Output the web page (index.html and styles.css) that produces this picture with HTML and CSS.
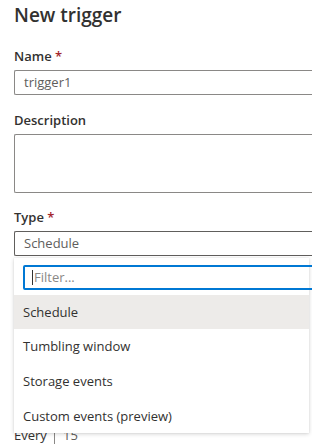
FILE: index.html
```html
<!DOCTYPE html>
<html>
<head>
<meta charset="utf-8">
<link rel="stylesheet" href="styles.css">
</head>
<body>
<div class="panel">
  <h1 class="title">New trigger</h1>
  <div class="field field-name">
    <div class="label">Name <span class="req">*</span></div>
    <div class="input">trigger1</div>
  </div>
  <div class="field field-desc">
    <div class="label">Description</div>
    <div class="textarea"></div>
  </div>
  <div class="field field-type">
    <div class="label">Type <span class="req">*</span></div>
    <div class="input select">Schedule</div>
  </div>
  <div class="every-row">
    <span class="every-label">Every</span>
    <span class="every-input">15</span>
  </div>
  <div class="dropdown">
    <div class="filter"><span class="caret"></span>Filter...</div>
    <div class="option selected">Schedule</div>
    <div class="option">Tumbling window</div>
    <div class="option">Storage events</div>
    <div class="option">Custom events (preview)</div>
  </div>
</div>
</body>
</html>
```

FILE: styles.css
```css
html, body {
  margin: 0;
  padding: 0;
  background: #ffffff;
  overflow: hidden;
}
body {
  width: 312px;
  height: 444px;
  font-family: "Open Sans", "Noto Sans", sans-serif;
  color: #323130;
}
.panel {
  position: relative;
  padding: 0 0 0 14px;
  height: 444px;
  box-sizing: border-box;
}
.title {
  margin: 0;
  padding-top: 2px;
  font-size: 19px;
  font-weight: 600;
  line-height: 26px;
  color: #323130;
}
.field {
  display: flex;
  flex-direction: column;
}
.label {
  font-size: 13px;
  font-weight: 600;
  line-height: 18px;
  height: 18px;
  margin-bottom: 5px;
  color: #323130;
}
.req {
  color: #a4262c;
}
.field-name { margin-top: 19px; }
.field-desc { margin-top: 16px; }
.field-type { margin-top: 15px; }
.input {
  height: 25px;
  box-sizing: border-box;
  border: 1px solid #8a8886;
  border-right: none;
  border-radius: 2px 0 0 2px;
  padding-left: 9px;
  font-size: 13px;
  line-height: 23px;
  color: #605e5c;
}
.select {
  border-color: #605e5c;
}
.textarea {
  height: 59px;
  box-sizing: border-box;
  border: 1px solid #8a8886;
  border-right: none;
  border-radius: 2px 0 0 2px;
}
.every-row {
  margin-top: 169px;
  display: flex;
  align-items: center;
  font-size: 13px;
  color: #323130;
  height: 20px;
}
.every-label {
  width: 40px;
}
.every-input {
  border-left: 1px solid #8a8886;
  padding-left: 8px;
  height: 20px;
  line-height: 20px;
  color: #605e5c;
}
.dropdown {
  position: absolute;
  top: 258px;
  left: 14px;
  width: 295px;
  height: 175px;
  background: #ffffff;
  box-shadow: 0 1px 4px rgba(0, 0, 0, 0.18), 0 0 1px rgba(0, 0, 0, 0.1);
  display: flex;
  flex-direction: column;
}
.filter {
  margin: 7px -6px 0 9px;
  height: 25px;
  box-sizing: border-box;
  border: 2px solid #0078d4;
  border-radius: 2px;
  padding-left: 7px;
  font-size: 13px;
  line-height: 21px;
  color: #8a8886;
  display: flex;
  align-items: center;
}
.caret {
  display: inline-block;
  width: 1px;
  height: 15px;
  background: #323130;
  margin-right: 1px;
}
.option {
  height: 35px;
  line-height: 35px;
  padding-left: 9px;
  font-size: 13px;
  color: #323130;
  flex: none;
}
.option.selected {
  margin-top: 5px;
  height: 34px;
  line-height: 34px;
  background: #edebe9;
}
```
